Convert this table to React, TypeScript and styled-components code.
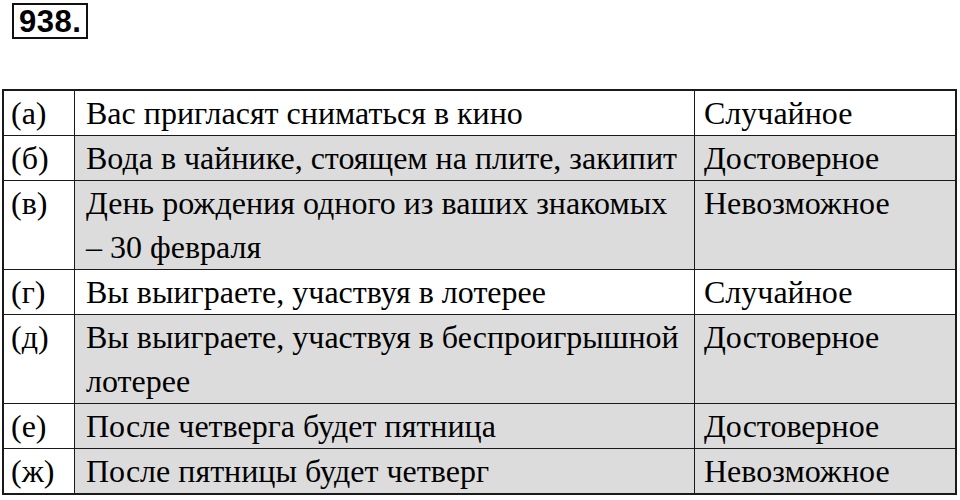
import { Fragment, ReactNode } from "react";
import styled, { createGlobalStyle } from "styled-components";

const GlobalStyle = createGlobalStyle`
  body {
    margin: 0;
    background: #ffffff;
    color: #000000;
  }
`;

const Page = styled.div`
  width: 960px;
  height: 500px;
  padding: 3px 0 0 2px;
  box-sizing: border-box;
  overflow: hidden;
  font-family: "Liberation Serif", "Times New Roman", serif;
`;

const TaskNumber = styled.div`
  display: inline-block;
  margin-left: 10px;
  padding: 0 5px;
  height: 32px;
  border: 2px solid #111;
  font-family: "Liberation Sans", Arial, sans-serif;
  font-weight: bold;
  font-size: 31px;
  line-height: 33px;
  letter-spacing: 0.5px;
`;

// grid lines come from the dark background showing through the 1px gaps
const Grid = styled.div`
  margin-top: 50px;
  width: 951px;
  display: grid;
  grid-template-columns: 70px 619px 260px;
  gap: 1px;
  background: #1a1a1a;
  border: 2px solid #1a1a1a;
`;

const Cell = styled.div<{ $shaded?: boolean; $pad: number }>`
  padding: 0 2px 0 ${(p) => p.$pad}px;
  font-family: "Liberation Serif", "Times New Roman", serif;
  font-size: 32px;
  line-height: 44px;
  background: ${(p) => (p.$shaded ? "#dcdcdc" : "#ffffff")};
`;

const NoWrap = styled.span`
  white-space: nowrap;
`;

const rows: { label: string; text: ReactNode; kind: string; shaded: boolean }[] = [
  { label: "(а)", text: "Вас пригласят сниматься в кино", kind: "Случайное", shaded: false },
  { label: "(б)", text: "Вода в чайнике, стоящем на плите, закипит", kind: "Достоверное", shaded: true },
  {
    label: "(в)",
    text: (
      <>
        День рождения одного из ваших знакомых <NoWrap>– 30</NoWrap> февраля
      </>
    ),
    kind: "Невозможное",
    shaded: true,
  },
  { label: "(г)", text: "Вы выиграете, участвуя в лотерее", kind: "Случайное", shaded: false },
  { label: "(д)", text: "Вы выиграете, участвуя в беспроигрышной лотерее", kind: "Достоверное", shaded: true },
  { label: "(е)", text: "После четверга будет пятница", kind: "Достоверное", shaded: true },
  { label: "(ж)", text: "После пятницы будет четверг", kind: "Невозможное", shaded: true },
];

export default function App() {
  return (
    <Page>
      <GlobalStyle />
      <TaskNumber>938.</TaskNumber>
      <Grid>
        {rows.map((r) => (
          <Fragment key={r.label}>
            <Cell $pad={7}>{r.label}</Cell>
            <Cell $pad={11} $shaded={r.shaded}>{r.text}</Cell>
            <Cell $pad={9} $shaded={r.shaded}>{r.kind}</Cell>
          </Fragment>
        ))}
      </Grid>
    </Page>
  );
}
